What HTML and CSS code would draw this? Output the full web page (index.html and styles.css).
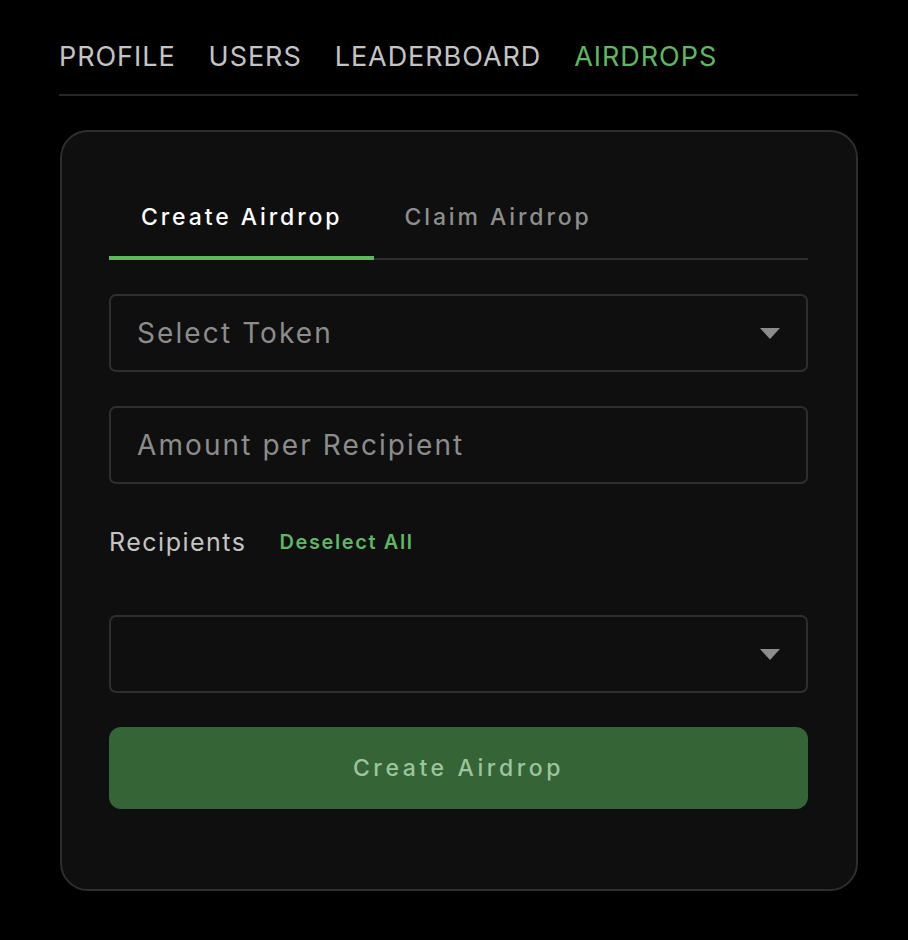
FILE: index.html
```html
<!DOCTYPE html>
<html lang="en">
<head>
<meta charset="utf-8">
<title>Airdrops</title>
<link rel="stylesheet" href="styles.css">
</head>
<body>
<div class="page">
  <nav class="nav">
    <a class="nav-item">PROFILE</a>
    <a class="nav-item">USERS</a>
    <a class="nav-item">LEADERBOARD</a>
    <a class="nav-item active">AIRDROPS</a>
  </nav>
  <section class="card">
    <div class="tabs">
      <div class="tab active">Create Airdrop</div>
      <div class="tab">Claim Airdrop</div>
    </div>
    <div class="form">
      <div class="field select">
        <span class="placeholder">Select Token</span>
        <svg class="caret" width="20" height="11" viewBox="0 0 20 11"><path d="M0 0H20L10 11Z" fill="#8c8c8c"/></svg>
      </div>
      <div class="field">
        <span class="placeholder">Amount per Recipient</span>
      </div>
      <div class="recipients">
        <span class="rec-label">Recipients</span>
        <span class="rec-action">Deselect All</span>
      </div>
      <div class="field select">
        <span class="placeholder"></span>
        <svg class="caret" width="20" height="11" viewBox="0 0 20 11"><path d="M0 0H20L10 11Z" fill="#8c8c8c"/></svg>
      </div>
      <button class="submit">Create Airdrop</button>
    </div>
  </section>
</div>
</body>
</html>
```
FILE: styles.css
```css
* { box-sizing: border-box; }
html, body { margin: 0; background: #000; }
body { font-family: Inter, "Liberation Sans", sans-serif; }
.page { padding: 39px 50px 0 59px; width: 908px; }
.nav {
  display: flex;
  gap: 33px;
  padding-bottom: 19px;
  border-bottom: 2px solid #262626;
}
.nav-item {
  font-size: 27px;
  line-height: 36px;
  color: #c4c4c4;
  letter-spacing: 0.95px;
}
.nav-item.active { color: #5cb861; }
.card {
  margin-top: 34px;
  margin-left: 1px;
  background: #0f0f0f;
  border: 2px solid #2e2e2e;
  border-radius: 28px;
  padding: 46px 48px 80px 47px;
}
.tabs {
  display: flex;
  border-bottom: 2px solid #2e2e2e;
}
.tab {
  padding: 24px 32px 22px;
  font-size: 23px;
  line-height: 30px;
  letter-spacing: 2.9px;
  color: #8e8e8e;
  font-weight: 500;
}
.tab.active {
  color: #fff;
  font-weight: 500;
  border-bottom: 4px solid #5cb861;
  margin-bottom: -2px;
}
.tab + .tab { padding-bottom: 26px; padding-left: 30px; }
.form {
  display: flex;
  flex-direction: column;
  gap: 34px;
  margin-top: 34px;
}
.field {
  height: 78px;
  border: 2px solid #2e2e2e;
  border-radius: 7px;
  display: flex;
  align-items: center;
  justify-content: space-between;
  padding: 0 26px 0 26px;
}
.placeholder {
  font-size: 28px;
  color: #8c8c8c;
  letter-spacing: 2.1px;
  font-weight: 400;
}
.recipients {
  display: flex;
  align-items: center;
  gap: 33px;
  height: 48px;
  margin-bottom: 15px;
}
.rec-label {
  font-size: 25px;
  color: #c4c4c4;
  letter-spacing: 1.5px;
}
.rec-action {
  font-size: 20px;
  color: #5cb861;
  font-weight: 600;
  letter-spacing: 1.6px;
}
.submit {
  height: 82px;
  border: none;
  border-radius: 12px;
  background: #356437;
  color: #9cc59d;
  font-family: inherit;
  font-size: 23px;
  letter-spacing: 3.6px;
  font-weight: 500;
}
```
